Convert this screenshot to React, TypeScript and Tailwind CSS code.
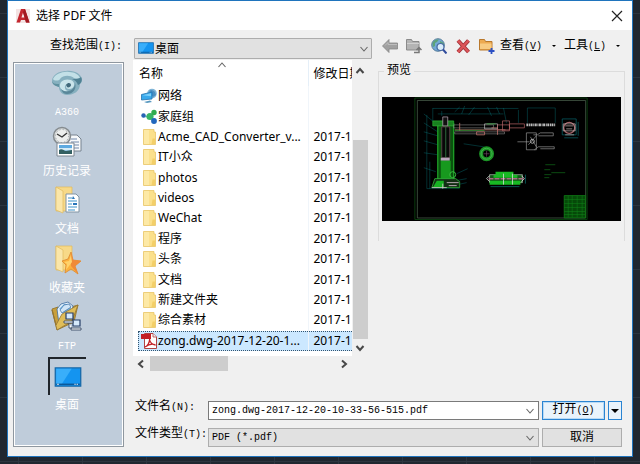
import React from "react";

const uiFont = "font-['Noto_Sans','Noto_Sans_CJK_SC',sans-serif]";
const formFont = "font-['Liberation_Mono','Noto_Sans_CJK_SC',monospace]";

function Chevron({ className, dir = "down", thick = false }: { className?: string; dir?: "up" | "down" | "left" | "right"; thick?: boolean }) {
  const d = { up: "M1.5 7 5 3l3.5 4", down: "M1.5 3 5 7l3.5-4", left: "M7 1.5 3 5l4 3.5", right: "M3 1.5 7 5l-4 3.5" }[dir];
  return (
    <svg viewBox="0 0 10 10" className={className} fill="none" stroke={thick ? "#484848" : "#666"} strokeWidth={thick ? 2 : 1.1} aria-hidden="true">
      <path d={d} />
    </svg>
  );
}

function Accel({ letter, underline = false }: { letter: string; underline?: boolean }) {
  return <span className="text-[10px]">({underline ? <u>{letter}</u> : letter})</span>;
}

function FolderIcon() {
  return (
    <svg viewBox="0 0 16 16" className="h-4 w-4" aria-hidden="true">
      <path d="M2.5.5h10.500v2.500h1.500v12.500H2.500z" fill="#fbe08c" stroke="#e9c567" strokeWidth=".8" />
      <path d="M3 1h5v14H3z" fill="#fde9a6" />
      <path d="M11.500 9.500h2.500V15h-3.500z" fill="#f3cf68" />
    </svg>
  );
}

function NetworkIcon() {
  return (
    <svg viewBox="0 0 16 16" className="h-4 w-4" aria-hidden="true">
      <circle cx="11" cy="5.500" r="4.800" fill="#7fb4d6" />
      <path d="M8 3c2-2 4-1 6 1l1 3-3 2z" fill="#4a8fc2" />
      <path d="M.5 6.500 11 4v7L.5 12z" fill="#38a9ec" stroke="#2272ae" strokeWidth=".8" />
      <path d="M1.500 7.200 10 5.200v3z" fill="#7cd0fa" />
      <path d="M3 14l6-1.500L11 14l-5 1z" fill="#5797bf" />
    </svg>
  );
}

function HomegroupIcon() {
  return (
    <svg viewBox="0 0 16 16" className="h-4 w-4" aria-hidden="true">
      <path d="M2 7.500h6M9 8l4-5M9 8l4 4" stroke="#6ab8cd" strokeWidth="1.300" />
      <circle cx="2.500" cy="6.500" r="2.200" fill="#2763b4" />
      <circle cx="9" cy="7.500" r="3.600" fill="#38b565" />
      <circle cx="13" cy="3.500" r="2.700" fill="#31ac4e" />
      <circle cx="13" cy="12" r="2.900" fill="#2267bd" />
    </svg>
  );
}

function PdfIcon() {
  return (
    <svg viewBox="0 0 16 16" className="h-4 w-4" aria-hidden="true">
      <path d="M3.500.5H12l3.500 3.500v11.500h-12z" fill="#fff" stroke="#b04444" />
      <path d="M0 1h10v5H0z" fill="#c31f25" />
      <path d="M12 .5V4h3.500" fill="#eee" stroke="#b04444" strokeWidth=".8" />
      <path d="M4 14c2.500-1 5-5 4.500-8M8.500 6c0 3 3 6 6 6-3-1.500-7-.5-10.500 2" fill="none" stroke="#c31f25" strokeWidth="1.300" />
    </svg>
  );
}

function DesktopIcon({ className }: { className?: string }) {
  return (
    <svg viewBox="0 0 30 22" className={className} aria-hidden="true">
      <path d="M1 1h28v20H1z" fill="#1494f0" stroke="#1668a8" strokeWidth="1.400" />
      <path d="M2 2h17L8 19H2z" fill="#39aefa" />
      <path d="M2 19h26" stroke="#0c5796" strokeWidth="1.500" />
      <path d="M22 19h1.500M24.500 19H26M3 19h2" stroke="#fff" />
    </svg>
  );
}

function A360Icon() {
  return (
    <svg viewBox="0 0 32 32" className="h-8 w-8" aria-hidden="true">
      <path d="M1 14C1 8 8 4 15 4c8-1 16 3 16 9 0 2-1 3-2 4 0 7-6 11-13 11-5 0-8-4-8-8-4-1-7-3-7-6z" fill="#86b0bf" />
      <path d="M2 12C4 7 12 4 18 5c6 0 10 3 11 6-2 1-4 1-6 0-4-3-11-3-14 1-1 2-6 2-7 0z" fill="#c3e0e7" />
      <path d="M9 20c-1-6 5-9 11-7 5 2 4 9-2 9-3 0-4-3-2-5-3 1-3 6 1 7-4 1-7-1-8-4z" fill="#c9e4ea" />
      <path d="M10 22c4 5 14 2 14-6 2 6-2 11-8 11-3 0-5-2-6-5z" fill="#5a8799" />
      <path d="M15 18c2-3 5-2 5 0s-3 3-4 2z" fill="#41697b" />
      <path d="M30 10c2 3 0 7-3 8-1-3-3-5-6-6 4 0 7 0 9-2z" fill="#4f8193" />
      <path d="M1 14c1 3 4 3 7 3v3c-4-1-7-3-7-6z" fill="#5f909f" />
    </svg>
  );
}

function HistoryIcon() {
  return (
    <svg viewBox="0 0 32 32" className="h-8 w-8" aria-hidden="true">
      <path d="M17 9h9l4 4v12H17z" fill="#f7f9fb" stroke="#76828f" />
      <path d="M20 13h6M20 16h8M20 19h8M20 22h8" stroke="#7288aa" />
      <circle cx="11" cy="10" r="8.500" fill="#d7dada" stroke="#858b8f" strokeWidth="1.500" />
      <circle cx="11" cy="10" r="6.500" fill="#eceeed" stroke="#9a9fa2" strokeDasharray="1 2.400" />
      <path d="M6 8l5 3 5-4" fill="none" stroke="#333" strokeWidth="1.300" />
      <path d="M6 17h17v13H6z" fill="#fff" stroke="#7c8791" />
      <path d="M8 19h13v9H8z" fill="#5eaae0" />
      <path d="M8 22h13v2.500H8z" fill="#d6ecf6" />
      <path d="M8 24c3-2 5 1 7 1l6-1v4H8z" fill="#325f61" />
    </svg>
  );
}

function BigFolder() {
  return (
    <>
      <path d="M5 3h16v24H5z" fill="#f7d988" stroke="#dfb95c" strokeWidth=".7" />
      <path d="M5 3l7 4v22l-7-3z" fill="#fae6a9" stroke="#dfb95c" strokeWidth=".7" />
    </>
  );
}

function DocumentsIcon() {
  return (
    <svg viewBox="0 0 32 32" className="h-8 w-8" aria-hidden="true">
      <BigFolder />
      <path d="M15 10h10l3 3v15H15z" fill="#fff" stroke="#8194a4" />
      <path d="M17 14h4M17 17h9M17 20h4M17 23h9M17 26h7" stroke="#3e94c9" strokeWidth="1.200" />
      <path d="M22 12l2 3h-3zM22 19h4v2h-4z" fill="#2a77bb" />
    </svg>
  );
}

function FavoritesIcon() {
  return (
    <svg viewBox="0 0 32 32" className="h-8 w-8" aria-hidden="true">
      <BigFolder />
      <path d="M20 9l2 8 8 1-6 5 3 8-7-5-6 4 1-8-4-4 6-2z" fill="#fbb13d" stroke="#dc8931" strokeWidth=".8" />
      <path d="M20 9l2 8 8 1-6 5 3 8-7-8z" fill="#f08a37" />
      <path d="M20 12l1 7-6 8 1-6-3-2 5-1z" fill="#ffd26b" />
    </svg>
  );
}

function FtpIcon() {
  return (
    <svg viewBox="0 0 32 32" className="h-8 w-8" aria-hidden="true">
      <path d="M1 8l6-2 2 3 18-5-4 17L6 29z" fill="#c99f3b" stroke="#8f7028" strokeWidth=".8" />
      <path d="M6 8l4-5 7-2 5 4-3 15-11 3z" fill="#e4f0fa" stroke="#3b6ba0" strokeWidth=".8" />
      <path d="M8 8l5-5 4 0-5 6zM12 10l8-4v7l-8 5z" fill="#76b7e7" />
      <path d="M1 9l4 15 6-11 16-9-6 16L6 29z" fill="#e0bd58" stroke="#927433" strokeWidth=".8" />
      <path d="M9 9l4-5 5-1 2 3-9 6z" fill="#cfe4f6" stroke="#3b6ba0" strokeWidth=".7" />
      <path d="M15 12h7v6h-7zM22 19h7v6h-7z" fill="#d5e9fb" stroke="#273e68" strokeWidth="1.200" />
      <path d="M13 20h9v2h-9zM20 27h10v2H20zM18 22v5h3" fill="#fff" stroke="#364762" strokeWidth=".9" />
    </svg>
  );
}

const places = [
  { name: "A360", icon: <A360Icon />, latin: true },
  { name: "历史记录", icon: <HistoryIcon /> },
  { name: "文档", icon: <DocumentsIcon /> },
  { name: "收藏夹", icon: <FavoritesIcon /> },
  { name: "FTP", icon: <FtpIcon />, latin: true },
  { name: "桌面", icon: <DesktopIcon className="h-5 w-7" />, active: true },
];

const files = [
  { name: "网络", icon: <NetworkIcon />, date: "" },
  { name: "家庭组", icon: <HomegroupIcon />, date: "" },
  { name: "Acme_CAD_Converter_v...", icon: <FolderIcon />, date: "2017-1" },
  { name: "IT小众", icon: <FolderIcon />, date: "2017-1" },
  { name: "photos", icon: <FolderIcon />, date: "2017-1" },
  { name: "videos", icon: <FolderIcon />, date: "2017-1" },
  { name: "WeChat", icon: <FolderIcon />, date: "2017-1" },
  { name: "程序", icon: <FolderIcon />, date: "2017-1" },
  { name: "头条", icon: <FolderIcon />, date: "2017-1" },
  { name: "文档", icon: <FolderIcon />, date: "2017-1" },
  { name: "新建文件夹", icon: <FolderIcon />, date: "2017-1" },
  { name: "综合素材", icon: <FolderIcon />, date: "2017-1" },
  { name: "zong.dwg-2017-12-20-1...", icon: <PdfIcon />, date: "2017-1", selected: true },
];

function Toolbar() {
  return (
    <div className="flex h-4 flex-1 items-center">
      <button aria-label="后退" className="ml-[10px]">
        <svg viewBox="0 0 16 16" className="h-4 w-4">
          <path d="M.5 8 7 1.500V5h8.500v6H7v3.500z" fill="#a0a0a0" stroke="#858585" strokeWidth=".8" />
          <path d="M3 7.500 6 4.500v2h9" fill="none" stroke="#bdbdbd" />
        </svg>
      </button>
      <button aria-label="上一级" className="ml-2">
        <svg viewBox="0 0 16 16" className="h-4 w-4">
          <path d="M.5 1.500h5l1 2H13v8.500H.5z" fill="#b4b4b4" stroke="#8a8a8a" />
          <path d="M1 5.500h12" stroke="#d0d0d0" />
          <path d="M8 14.500h5V10M10.500 12 13 9.500l2.500 2.500" fill="none" stroke="#777" strokeWidth="1.500" />
        </svg>
      </button>
      <button aria-label="搜索 Web" className="ml-[9px]">
        <svg viewBox="0 0 16 16" className="h-4 w-4">
          <circle cx="7" cy="7" r="6.300" fill="#72a9d6" stroke="#4d7391" strokeWidth=".9" />
          <path d="M1.500 5C3 2 5 1 8 1.500L6 4 4 5v3L2 9zM9 3l4 2-1 3-3-2z" fill="#5da37a" />
          <circle cx="9.500" cy="9" r="3.500" fill="#d9ecfa" stroke="#4568a0" strokeWidth="1.200" />
          <path d="m12 11.500 3.500 4" stroke="#304b9c" strokeWidth="2" />
        </svg>
      </button>
      <button aria-label="删除" className="ml-2">
        <svg viewBox="0 0 16 16" className="h-4 w-4">
          <path d="M3 2.500 13.500 14M13.500 2.500 3 14" stroke="#9e3036" strokeWidth="4" />
          <path d="M3 2.500 13.500 14M13.500 2.500 3 14" stroke="#dc5559" strokeWidth="2.400" />
        </svg>
      </button>
      <button aria-label="创建新文件夹" className="ml-2">
        <svg viewBox="0 0 16 16" className="h-4 w-4">
          <path d="M.5 1.500h5l1 2H13v8.500H.5z" fill="#edaa50" stroke="#b9782c" />
          <path d="M1 5.500h11.500V11H1z" fill="#f8cb82" />
          <path d="M12.500 10v6M9.500 13h6" stroke="#2c50c4" strokeWidth="1.800" />
        </svg>
      </button>
      <button className="ml-[5px] flex items-center whitespace-nowrap">
        <span>查看<Accel letter="V" underline /></span>
        <svg viewBox="0 0 4 2" className="ml-[10px] h-0.5 w-1"><path d="M0 0h4L2 2z" /></svg>
      </button>
      <button className="ml-2 flex items-center whitespace-nowrap">
        <span>工具<Accel letter="L" underline /></span>
        <svg viewBox="0 0 4 2" className="ml-[10px] h-0.5 w-1"><path d="M0 0h4L2 2z" /></svg>
      </button>
    </div>
  );
}

function DrawingPreview() {
  return (
    <svg viewBox="0 0 240 125" className="block w-full bg-black" role="img" aria-label="图纸预览" fill="none">
      <path d="M33 1h173v122H33z" stroke="#0b4a10" strokeWidth=".8" />
      <path d="M35.500 3.500h169v118h-169z" stroke="#4f6650" strokeWidth=".7" />
      <g stroke="#087f86" strokeWidth=".5" strokeOpacity=".75">
        <path d="M51 11v13M51 11.500h86M56 17h66M45 18v74h33M48 65v27M42 17l10 8M42 26l14 9M42 35l14 4M42 44l14 4M42 56l14 2M42 71l12 4M75 77l11-5M74 84l11-2M76 88l9-2M73 15l5-5M80 17l3-8M87 18l6-8M110 19l-4-9M118 17l-3-7M122 11l3 15M82 47l20 3M137 13v13M146 26V11h28v15M60 19v-5" />
      </g>
      <path d="M56 27h16v56H56z" fill="#0a520e" stroke="#20a82a" strokeWidth="1.200" />
      <path d="M51 24h21v5H51z" fill="#187f1f" stroke="#30c73b" strokeWidth=".6" />
      <path d="M61 20h5v9h-5z" fill="#111" stroke="#bda9ba" strokeWidth=".7" />
      <path d="M60 30h8v31h-8z" fill="#080808" stroke="#7b4a60" strokeWidth=".7" />
      <path d="M64 30v31" stroke="#2e6a3b" />
      <path d="M59 61h9v3h-9z" fill="#bba5bc" />
      <path d="M59 64h10v18H59z" fill="#17991e" />
      <path d="M53 82h21l4 3v6H50z" fill="#122e14" stroke="#31b83b" strokeWidth=".8" />
      <path d="M51 91l4-7h7v7z" fill="#16b222" />
      <path d="M50 91h15M65 86h12M67 89h8M61 87v5" stroke="#e0c8d8" strokeWidth=".8" />
      <circle cx="71" cy="78" r="3" stroke="#36bc40" />
      <path d="M72 28h40v3H72zM73 35h50v2H73z" stroke="#888" strokeWidth=".6" />
      <path d="M73 33h51M95 35h8v3h-8zM78 26v8M110 31h6v7" stroke="#c1736c" strokeWidth=".8" />
      <path d="M103 27h13v5h-13z" stroke="#bbb" strokeWidth=".7" />
      <path d="M105 27h9M73 33.500h30" stroke="#2cac36" strokeWidth=".7" />
      <path d="M116 28h12v5h-12zM121 24h7v10h-7zM128 27h15v4h-15z" stroke="#b56366" strokeWidth=".7" />
      <path d="M145 28h29" stroke="#bbb" strokeWidth="3" strokeDasharray="2 .7 1 .5" />
      <path d="M145 36h10v17h-10zM152 38h4l3-2h13v3h-15M153 53l4-3h16v2h-14M149 40l6 10M155 39l-8 9M136 45h12" stroke="#aaa" strokeWidth=".6" />
      <circle cx="151" cy="44.500" r="2" stroke="#ddd" strokeWidth=".7" />
      <circle cx="105" cy="57" r="5.500" stroke="#1b9425" strokeWidth="4" />
      <circle cx="105" cy="57" r="5.500" stroke="#69c773" strokeWidth=".5" />
      <path d="M102 57h6M105 54v6" stroke="#78506d" strokeWidth=".6" />
      <path d="M108 78h33v8h-33z" fill="#14551a" stroke="#cfd8cf" strokeWidth=".6" />
      <path d="M114 75h18v4h-18zM108 84h31v4h-31zM112 78h24v3h-24z" fill="#18b923" />
      <path d="M107 82h36" stroke="#a86a84" strokeWidth="1.500" strokeDasharray="5 1" />
      <path d="M122 77v11M131 77v11M108 79l-3 3 3 3M140 79l3 3-3 3" stroke="#ddd" strokeWidth=".8" />
      <path d="M109 90h29M144 78v9" stroke="#128a8b" strokeWidth=".6" />
      <path d="M181 22h14v16h-14zM197 25v14M183 41h14" stroke="#08777e" strokeWidth=".6" />
      <circle cx="188" cy="31" r="5.500" stroke="#a6656b" strokeWidth="1.200" />
      <path d="M182 27h12v7h-12zM184 38h9M184 29h8M185 32h6" stroke="#c7b4b5" strokeWidth=".7" />
      <path d="M164 68h10M163 73h6M170 76h14M163 78h7M163 81h5" stroke="#106b18" strokeWidth=".7" />
      <path d="M183 99h21.500v22.500H183z" fill="#064909" stroke="#128b19" strokeWidth=".7" />
      <path d="M187 99v22M191 99v22M196 99v22M201 99v22M183 103h21M183 107h21M183 111h21M183 115h21M183 118h21" stroke="#10851a" strokeWidth=".5" />
    </svg>
  );
}

function FileList() {
  return (
    <section className="grid w-[235px] shrink-0 grid-cols-[219px_16px] grid-rows-[296px_15px]" aria-label="文件列表">
      <div className={`relative overflow-hidden bg-white pl-[5px] ${uiFont}`}>
        <Chevron dir="up" className="absolute left-[84px] top-0 h-[10px] w-[10px]" />
        <table className="h-[291px] w-[260px] table-fixed border-collapse text-[12px] leading-4">
          <thead>
            <tr className="h-[26px]">
              <th className="w-[170px] border-r border-[#e5eff8] p-0 pl-px pt-0.5 text-left font-normal">名称</th>
              <th className="p-0 pl-[5px] pt-0.5 text-left font-normal">修改日期</th>
            </tr>
          </thead>
          <tbody>
            {files.map((f) => (
              <tr key={f.name} aria-selected={!!f.selected} className={f.selected ? "bg-[#cce8ff] outline-1 -outline-offset-1 outline-dotted outline-[#33546f]" : ""}>
                <td className="border-r border-[#f0f5fa] p-0">
                  <span className="flex items-center gap-px pl-[3px] leading-4 whitespace-nowrap">
                    {f.icon}
                    <span>{f.name}</span>
                  </span>
                </td>
                <td className="p-0 pl-[5px] whitespace-nowrap">{f.date}</td>
              </tr>
            ))}
          </tbody>
        </table>
      </div>
      <div className="flex flex-col items-center pt-[6px] pb-[3px]">
        <button aria-label="向上滚动"><Chevron dir="up" thick className="block h-[10px] w-[10px]" /></button>
        <div className="mt-16 w-[15px] flex-1 bg-[#cdcdcd]" />
        <button aria-label="向下滚动" className="mt-1"><Chevron thick className="block h-[10px] w-[10px]" /></button>
      </div>
      <div className="flex items-center pl-[3px] pr-[3px]">
        <button aria-label="向左滚动"><Chevron dir="left" thick className="block h-[10px] w-[10px]" /></button>
        <div className="ml-1 h-full w-[78px] bg-[#cdcdcd]" />
        <button aria-label="向右滚动" className="ml-auto"><Chevron dir="right" thick className="block h-[10px] w-[10px]" /></button>
      </div>
    </section>
  );
}

function FileForm() {
  return (
    <form className="mt-[30px] grid grid-cols-[75px_1fr_80px] gap-y-2 pr-[10px]" onSubmit={(e) => e.preventDefault()}>
      <label htmlFor="filename" className="pl-0.5 leading-3 whitespace-nowrap">文件名<Accel letter="N" /><span className="text-[10px]">:</span></label>
      <div className="relative mr-[3px]">
        <input id="filename" defaultValue="zong.dwg-2017-12-20-10-33-56-515.pdf" className="block h-[19px] w-full border border-[#7a7a7a] bg-white pl-[3px] text-[10px] outline-none" />
        <button type="button" aria-label="最近的文件名" className="absolute right-1 top-[5px]"><Chevron className="block h-[10px] w-[10px]" /></button>
      </div>
      <div className="flex gap-[3px]">
        <button className="h-[19px] flex-1 border border-[#2a84d2] bg-[#e9f3fb] leading-4 shadow-[inset_0_0_0_1px_#b9daf5]">打开<Accel letter="O" underline /></button>
        <button type="button" aria-label="打开选项" className="flex h-[19px] w-[14px] items-center justify-center border border-[#2a84d2] bg-[#e9f3fb]">
          <svg viewBox="0 0 8 4" className="h-1 w-2"><path d="M0 0h8L4 4z" /></svg>
        </button>
      </div>
      <label htmlFor="filetype" className="pl-0.5 leading-3 whitespace-nowrap">文件类型<Accel letter="T" /><span className="text-[10px]">:</span></label>
      <div className="relative mr-[3px]">
        <select id="filetype" className="block h-[19px] w-full appearance-none border border-[#adadad] bg-[#e1e1e1] pl-[3px] text-[10px] outline-none">
          <option>PDF (*.pdf)</option>
        </select>
        <Chevron className="pointer-events-none absolute right-1 top-[5px] h-[10px] w-[10px]" />
      </div>
      <button type="button" className="h-[19px] border border-[#adadad] bg-[#e1e1e1] text-[12px] leading-4">取消</button>
    </form>
  );
}

export default function App() {
  return (
    <div className="flex min-h-screen bg-[#202730] bg-[linear-gradient(#2d353f_1px,transparent_1px),linear-gradient(90deg,#2d353f_1px,transparent_1px)] bg-[size:64px_64px] bg-[position:18px_13px] px-[7px] pb-[7px]">
      <main className={`flex min-w-0 flex-1 flex-col border border-[#1f74bd] bg-[#f0f0f0] text-[12px] leading-4 text-black ${formFont}`}>
        <header className={`flex h-[29px] items-center bg-white pl-2 pr-[9px] ${uiFont}`}>
          <svg viewBox="0 0 14 14" className="h-[14px] w-[14px]" aria-hidden="true">
            <path d="M0 0h14v14H0z" fill="#f3e3e3" />
            <path d="M5 0h4l4.500 13.500H10L9.300 11H5L4 13.500H.5z" fill="#c4262e" />
            <path d="M7 3.500 8.500 8.500H5.500z" fill="#f6e6e6" />
            <path d="M9 0l4.500 13.500H10L7 3z" fill="#a11820" />
          </svg>
          <h1 className="ml-[6px] flex-1 text-[12px] font-normal">选择 PDF 文件</h1>
          <button aria-label="关闭">
            <svg viewBox="0 0 12 12" className="h-3 w-3" stroke="#222" strokeWidth="1.200"><path d="m1 1 10 10M11 1 1 11" /></svg>
          </button>
        </header>

        <div className="flex pt-2">
          <label htmlFor="look-in" className="w-[126px] pt-0.5 pr-3 text-right leading-3">查找范围<Accel letter="I" /><span className="text-[10px]">:</span></label>
          <div className={`relative w-[238px] ${uiFont}`}>
            <select id="look-in" className="block h-[21px] w-full appearance-none rounded-[1px] border border-[#adadad] bg-[#e1e1e1] pl-5 text-[12px] outline-none">
              <option>桌面</option>
            </select>
            <DesktopIcon className="pointer-events-none absolute left-1 top-1 h-3 w-4" />
            <Chevron className="pointer-events-none absolute right-[3px] top-[6px] h-[10px] w-[10px]" />
          </div>
          <Toolbar />
        </div>

        <div className="flex flex-1 items-start pt-px">
          <nav aria-label="位置" className="ml-[5px] mt-0.5 w-[111px] shrink-0 border border-[#8f979f] bg-white p-px">
            <ul className="grid h-[381px] grid-rows-[repeat(6,1fr)_30px] bg-[#bfccda] text-white">
              {places.map((p) => (
                <li key={p.name}>
                  <button className="flex w-full flex-col items-center pr-[3px]">
                    <span className={`flex h-[38px] w-[38px] items-center justify-center ${p.active ? "border-l-2 border-t-2 border-[#20252b]" : ""}`}>{p.icon}</span>
                    <span className={`pt-0.5 leading-[18px] ${p.latin ? "text-[10px]" : "text-[12px]"}`}>{p.name}</span>
                  </button>
                </li>
              ))}
            </ul>
          </nav>
          <div className="ml-[9px] min-w-0 flex-1">
            <div className="flex items-start">
              <FileList />
              <section aria-labelledby="preview-title" className="ml-[10px] mr-[7px] mt-[3px] min-w-0 flex-1">
                <div className="flex h-4 items-center">
                  <span className="mt-2 h-2 w-[6px] border-l border-t border-[#dcdcdc]" />
                  <h2 id="preview-title" className="px-[3px] text-[12px] font-normal">预览</h2>
                  <span className="mt-2 h-2 flex-1 border-r border-t border-[#dcdcdc]" />
                </div>
                <div className="h-[162px] border-x border-[#dcdcdc] pl-[3px] pr-[3px] pt-[18px]">
                  <DrawingPreview />
                </div>
              </section>
            </div>
            <FileForm />
          </div>
        </div>
      </main>
    </div>
  );
}
